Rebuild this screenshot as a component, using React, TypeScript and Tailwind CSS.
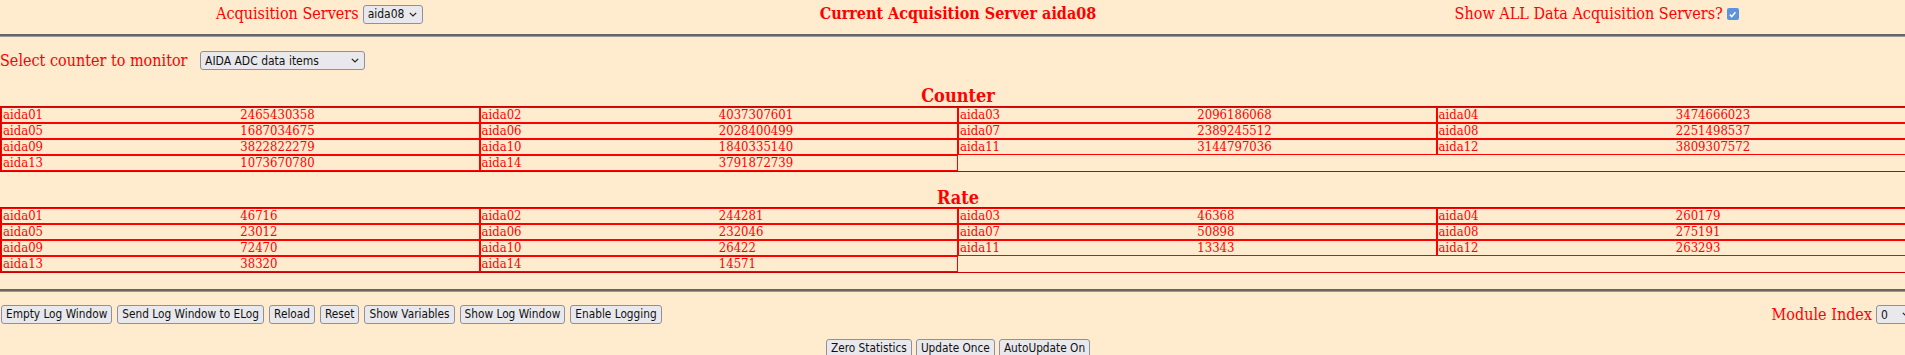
import React from "react";

const serif = { fontFamily: '"DejaVu Serif Condensed", "DejaVu Serif", serif', fontStretch: "condensed" } as React.CSSProperties;
const sans = { fontFamily: '"DejaVu Sans Condensed", "DejaVu Sans", sans-serif', fontStretch: "condensed" } as React.CSSProperties;

const counter: [string, string][] = [
  ["aida01", "2465430358"], ["aida02", "4037307601"], ["aida03", "2096186068"], ["aida04", "3474666023"],
  ["aida05", "1687034675"], ["aida06", "2028400499"], ["aida07", "2389245512"], ["aida08", "2251498537"],
  ["aida09", "3822822279"], ["aida10", "1840335140"], ["aida11", "3144797036"], ["aida12", "3809307572"],
  ["aida13", "1073670780"], ["aida14", "3791872739"],
];
const rate: [string, string][] = [
  ["aida01", "46716"], ["aida02", "244281"], ["aida03", "46368"], ["aida04", "260179"],
  ["aida05", "23012"], ["aida06", "232046"], ["aida07", "50898"], ["aida08", "275191"],
  ["aida09", "72470"], ["aida10", "26422"], ["aida11", "13343"], ["aida12", "263293"],
  ["aida13", "38320"], ["aida14", "14571"],
];

function Chevron() {
  return (
    <svg width="8" height="5" viewBox="0 0 8 5" className="shrink-0">
      <path d="M0.8 0.8 L4 4 L7.2 0.8" fill="none" stroke="#222" strokeWidth="1.2" />
    </svg>
  );
}

function Select({ value, width }: { value: string; width: string }) {
  return (
    <span
      className={`inline-flex h-[19px] items-center justify-between rounded-[3px] border border-[#8f8f9d] bg-[#e9e9ed] pl-[4px] pr-[5px] text-[12px] leading-none text-[#111] align-middle ${width}`}
      style={sans}
    >
      <span>{value}</span>
      <Chevron />
    </span>
  );
}

function Button({ children }: { children: React.ReactNode }) {
  return (
    <span
      className="inline-flex h-[19px] items-center rounded-[3px] border border-[#8f8f9d] bg-[#e9e9ed] px-[4px] text-[11.75px] leading-none text-[#111]"
      style={sans}
    >
      {children}
    </span>
  );
}

function DataTable({ rows }: { rows: [string, string][] }) {
  const cells: ([string, string] | null)[] = [...rows, null, null];
  return (
    <div className="grid grid-cols-4 border border-[#cc0000]">
      {cells.map((c, i) =>
        c ? (
          <div key={i} className="grid grid-cols-2 border border-[#ff0000] px-[1px] text-[13px] leading-[14px] text-[#ff0000]">
            <span>{c[0]}</span>
            <span>{c[1]}</span>
          </div>
        ) : (
          <div key={i} className="h-[16px]" />
        )
      )}
    </div>
  );
}

function Rule() {
  return <div className="h-[3px] border-t-2 border-b border-t-[#666666] border-b-[#9a9a9a]" />;
}

export default function App() {
  return (
    <div className="w-full h-[355px] overflow-hidden bg-[#ffebcd]">
      <div className="w-[1916px] text-[#ff0000]" style={serif}>
        <div className="grid grid-cols-3 pt-[2px] h-[23px] items-center text-center text-[16px]">
          <div className="flex items-center justify-center gap-[4px]">
            <span>Acquisition Servers</span>
            <Select value="aida08" width="w-[60px]" />
          </div>
          <div className="text-[16px] font-bold">Current Acquisition Server aida08</div>
          <div className="flex items-center justify-center gap-[4px]">
            <span>Show ALL Data Acquisition Servers?</span>
            <span className="inline-flex h-[12px] w-[12px] items-center justify-center rounded-[2px] bg-[#5b94dc]">
              <svg width="9" height="9" viewBox="0 0 10 10">
                <path d="M2 5.2 L4.2 7.4 L8.2 2.6" fill="none" stroke="white" strokeWidth="1.8" />
              </svg>
            </span>
          </div>
        </div>
        <div className="mt-[11px]">
          <Rule />
        </div>
        <div className="mt-[14px] flex h-[19px] items-center text-[16px]">
          <span className="w-[200px]">Select counter to monitor</span>
          <Select value="AIDA ADC data items" width="w-[165px]" />
        </div>
        <div className="mt-[17px] text-center text-[18px] font-bold leading-[18px]">Counter</div>
        <div className="mt-[1px]">
          <DataTable rows={counter} />
        </div>
        <div className="mt-[17px] text-center text-[18px] font-bold leading-[18px]">Rate</div>
        <div>
          <DataTable rows={rate} />
        </div>
        <div className="mt-[16px]">
          <Rule />
        </div>
        <div className="mt-[12px] flex h-[21px] items-center justify-between">
          <div className="flex items-center gap-[5px] pl-[1px]">
            <Button>Empty Log Window</Button>
            <Button>Send Log Window to ELog</Button>
            <Button>Reload</Button>
            <Button>Reset</Button>
            <Button>Show Variables</Button>
            <Button>Show Log Window</Button>
            <Button>Enable Logging</Button>
          </div>
          <div className="flex items-center gap-[4px] text-[16px]">
            <span>Module Index</span>
            <Select value="0" width="w-[40px]" />
          </div>
        </div>
        <div className="mt-[14px] flex justify-center gap-[4px]">
          <Button>Zero Statistics</Button>
          <Button>Update Once</Button>
          <Button>AutoUpdate On</Button>
        </div>
      </div>
    </div>
  );
}
